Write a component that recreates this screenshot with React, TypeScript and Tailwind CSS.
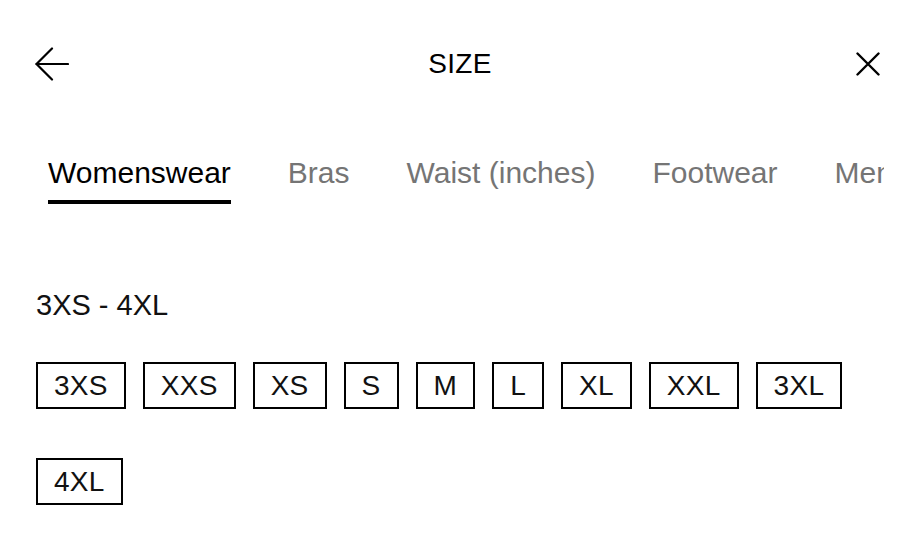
import { useState } from 'react';

const tabs = ['Womenswear', 'Bras', 'Waist (inches)', 'Footwear', 'Menswear'];
const sizes = ['3XS', 'XXS', 'XS', 'S', 'M', 'L', 'XL', 'XXL', '3XL', '4XL'];

function BackArrow() {
  return (
    <svg width="34" height="34" viewBox="0 0 34 34" fill="none" stroke="currentColor" strokeWidth="2.2" strokeLinecap="round" strokeLinejoin="round">
      <path d="M17 1.5 1.5 17 17 32.5" />
      <path d="M1.5 17H33" />
    </svg>
  );
}

function CloseIcon() {
  return (
    <svg width="24" height="24" viewBox="0 0 24 24" fill="none" stroke="currentColor" strokeWidth="2.4" strokeLinecap="round">
      <path d="M1.5 1.5l21 21M22.5 1.5l-21 21" />
    </svg>
  );
}

export default function App() {
  const [active, setActive] = useState('Womenswear');
  const [selected, setSelected] = useState<string | null>(null);

  return (
    <div className="w-[920px] h-[538px] overflow-hidden bg-white px-9 text-[#111] font-['Liberation_Sans',Arial,sans-serif]">
      {/* Header */}
      <div className="grid h-32 grid-cols-3 items-center">
        <button className="justify-self-start -ml-px text-black">
          <BackArrow />
        </button>
        <h1 className="justify-self-center text-[28px] leading-none tracking-[0.01em] text-black">SIZE</h1>
        <button className="justify-self-end mr-1 text-black">
          <CloseIcon />
        </button>
      </div>

      <div className="overflow-hidden pt-[27px]">
        <div className="flex gap-[57px] pl-3">
          {tabs.map((tab) => (
            <button
              key={tab}
              onClick={() => setActive(tab)}
              className="flex shrink-0 flex-col whitespace-nowrap"
            >
              <span className={`text-[30px] leading-[36px] ${active === tab ? 'text-black' : 'text-[#757575]'}`}>
                {tab}
              </span>
              <span className={`mt-[9px] h-1 w-full ${active === tab ? 'bg-black' : 'bg-transparent'}`} />
            </button>
          ))}
        </div>
      </div>

      {/* Size range */}
      <div className="mt-[83px] text-[29px] leading-[36px]">3XS - 4XL</div>

      <div className="mt-[39px] flex flex-wrap gap-x-[17px] gap-y-[49px]">
        {sizes.map((size) => (
          <button
            key={size}
            onClick={() => setSelected(size)}
            className={`flex h-[47px] items-center border-2 border-black px-4 text-[28px] leading-none tracking-[0.01em] ${selected === size ? 'bg-black text-white' : 'bg-white text-[#111]'}`}
          >
            {size}
          </button>
        ))}
      </div>
    </div>
  );
}
